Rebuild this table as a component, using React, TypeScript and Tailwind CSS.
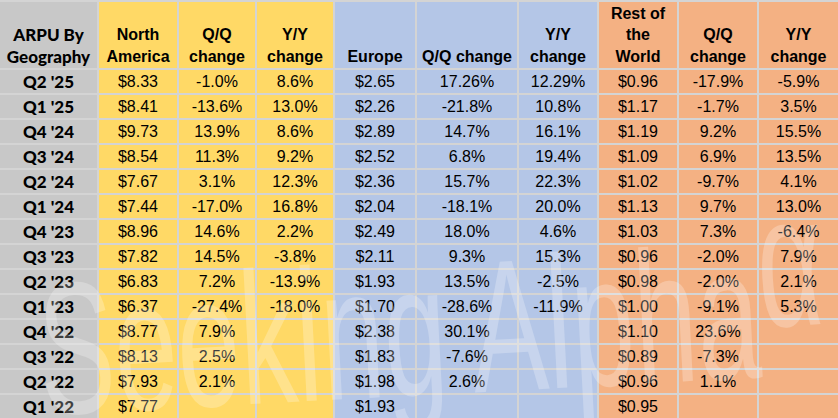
import React from 'react';

const headers: string[][] = [
    ['ARPU By', 'Geography'],
    ['North', 'America'],
    ['Q/Q', 'change'],
    ['Y/Y', 'change'],
    ['Europe'],
    ['Q/Q change'],
    ['Y/Y', 'change'],
    ['Rest of', 'the', 'World'],
    ['Q/Q', 'change'],
    ['Y/Y', 'change'],
];

const rows: string[][] = [
    ["Q2 '25", '$8.33', '-1.0%', '8.6%', '$2.65', '17.26%', '12.29%', '$0.96', '-17.9%', '-5.9%'],
    ["Q1 '25", '$8.41', '-13.6%', '13.0%', '$2.26', '-21.8%', '10.8%', '$1.17', '-1.7%', '3.5%'],
    ["Q4 '24", '$9.73', '13.9%', '8.6%', '$2.89', '14.7%', '16.1%', '$1.19', '9.2%', '15.5%'],
    ["Q3 '24", '$8.54', '11.3%', '9.2%', '$2.52', '6.8%', '19.4%', '$1.09', '6.9%', '13.5%'],
    ["Q2 '24", '$7.67', '3.1%', '12.3%', '$2.36', '15.7%', '22.3%', '$1.02', '-9.7%', '4.1%'],
    ["Q1 '24", '$7.44', '-17.0%', '16.8%', '$2.04', '-18.1%', '20.0%', '$1.13', '9.7%', '13.0%'],
    ["Q4 '23", '$8.96', '14.6%', '2.2%', '$2.49', '18.0%', '4.6%', '$1.03', '7.3%', '-6.4%'],
    ["Q3 '23", '$7.82', '14.5%', '-3.8%', '$2.11', '9.3%', '15.3%', '$0.96', '-2.0%', '7.9%'],
    ["Q2 '23", '$6.83', '7.2%', '-13.9%', '$1.93', '13.5%', '-2.5%', '$0.98', '-2.0%', '2.1%'],
    ["Q1 '23", '$6.37', '-27.4%', '-18.0%', '$1.70', '-28.6%', '-11.9%', '$1.00', '-9.1%', '5.3%'],
    ["Q4 '22", '$8.77', '7.9%', '', '$2.38', '30.1%', '', '$1.10', '23.6%', ''],
    ["Q3 '22", '$8.13', '2.5%', '', '$1.83', '-7.6%', '', '$0.89', '-7.3%', ''],
    ["Q2 '22", '$7.93', '2.1%', '', '$1.98', '2.6%', '', '$0.96', '1.1%', ''],
    ["Q1 '22", '$7.77', '', '', '$1.93', '', '', '$0.95', '', ''],
];

// column fill, Excel-style 40% lighter accents
const colBg = [
    'bg-[#c8c8c8]',
    'bg-[#ffd966]', 'bg-[#ffd966]', 'bg-[#ffd966]',
    'bg-[#b4c6e7]', 'bg-[#b4c6e7]', 'bg-[#b4c6e7]',
    'bg-[#f4b183]', 'bg-[#f4b183]', 'bg-[#f4b183]',
];

export default function App() {
    return (
        <div className="relative w-[838px] h-[418px] overflow-hidden bg-[#d4d4d4] pt-[2px]">
            <div className="grid grid-cols-[97px_78px_76px_76px_80px_100px_78px_78px_78px_79px] grid-rows-[66px_repeat(14,23px)] gap-[2px]">
                {headers.map((lines, i) => (
                    <div
                        key={'h' + i}
                        className={`${colBg[i]} flex flex-col justify-end items-center pb-[1px] text-center text-black leading-[21.5px] ${
                            i === 0 ? "text-[17px] font-black font-['Lato',sans-serif]" : "text-[16px] font-bold font-['Liberation_Sans',Arial,sans-serif]"
                        }`}>
                        {lines.map((l) => (
                            <span key={l} className="whitespace-nowrap">{l}</span>
                        ))}
                    </div>
                ))}
                {rows.map((row, r) =>
                    row.map((cell, c) => (
                        <div
                            key={r + '-' + c}
                            className={`${colBg[c]} flex items-center justify-center whitespace-nowrap text-black ${
                                c === 0
                                    ? "font-black text-[17px] font-['Lato',sans-serif]"
                                    : "text-[16px] font-['Liberation_Sans',Arial,sans-serif]"
                            }`}>
                            {cell}
                        </div>
                    ))
                )}
            </div>

            {/* watermark */}
            <div className="pointer-events-none absolute left-[44px] top-[256px] origin-bottom-left -rotate-3 scale-x-[0.6] whitespace-nowrap text-[188px] leading-none text-white/25 font-['Liberation_Sans',Arial,sans-serif]">
                Seeking Alpha<span className="relative -top-[50px]">α</span>
            </div>
        </div>
    );
}
